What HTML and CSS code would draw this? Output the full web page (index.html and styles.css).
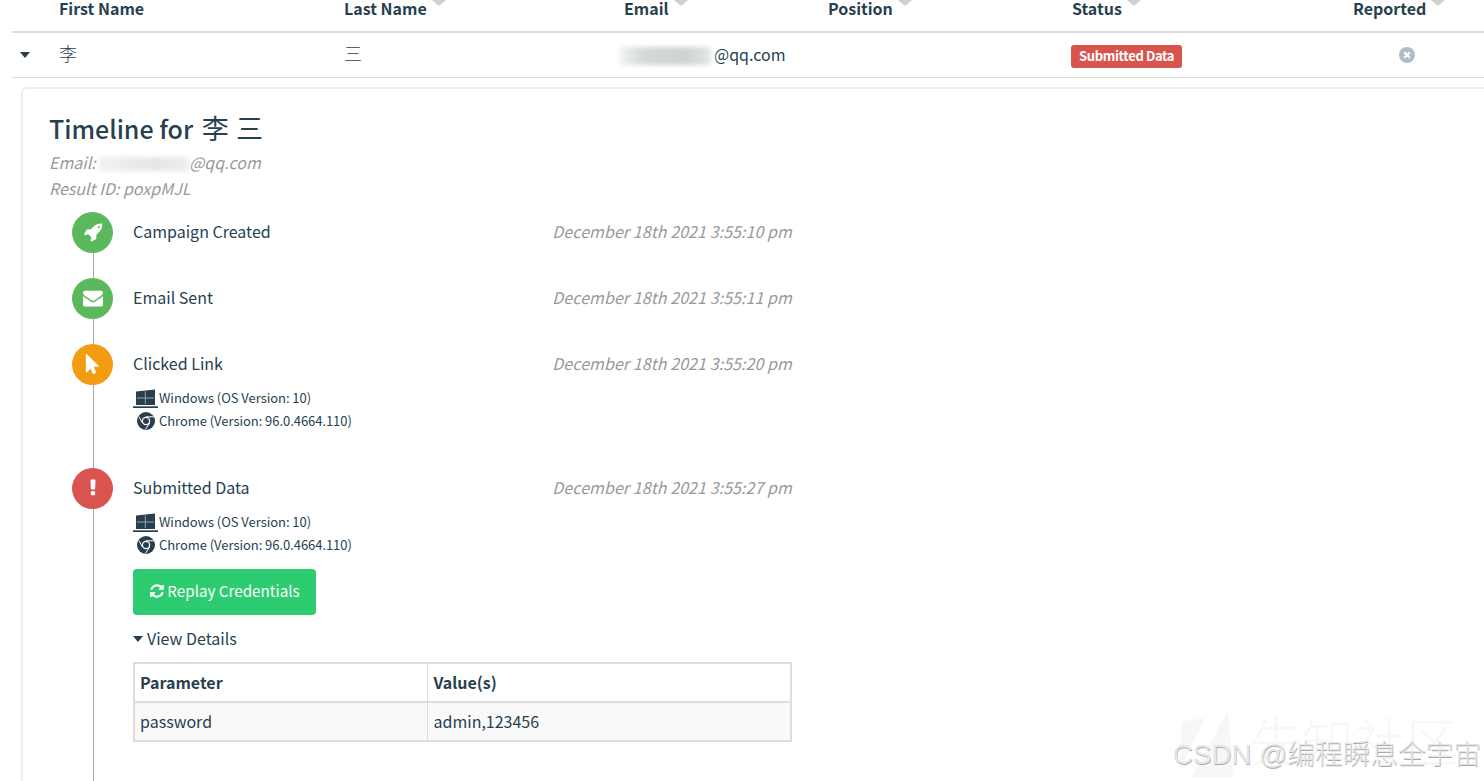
FILE: index.html
```html
<!DOCTYPE html>
<html lang="zh">
<head>
<meta charset="utf-8">
<title>Campaign Results</title>
<link rel="stylesheet" href="styles.css">
</head>
<body>
<svg class="defs" aria-hidden="true">
  <symbol id="i-rocket" viewBox="0 0 1792 1792"><path d="M1504 448q0-40-28-68t-68-28-68 28-28 68 28 68 68 28 68-28 28-68zm224-288q0 249-75.500 430.500t-253.500 360.500q-81 80-195 176l-20 379q-2 16-16 26l-384 224q-7 4-16 4-12 0-23-9l-64-64q-13-14-8-32l85-276-281-281-276 85q-3 1-9 1-14 0-23-9l-64-64q-17-19-5-39l224-384q10-14 26-16l379-20q96-114 176-195 188-187 358-258t431-71q14 0 24 9.500t10 22.500z"/></symbol>
  <symbol id="i-envelope" viewBox="0 0 1792 1792"><path d="M1792 710v794q0 66-47 113t-113 47h-1472q-66 0-113-47t-47-113v-794q44 49 101 87 362 246 497 345 57 42 92.500 65.500t94.500 48 110 24.500h2q51 0 110-24.500t94.500-48 92.500-65.500q170-123 498-345 57-39 100-87zm0-294q0 79-49 151t-122 123q-376 261-468 325-10 7-42.500 30.500t-54 38-52 32.500-57.500 27-50 9h-2q-23 0-50-9t-57.500-27-52-32.500-54-38-42.500-30.500q-91-64-262-182.500t-205-142.500q-62-42-117-115.500t-55-136.500q0-78 41.500-130t118.500-52h1472q65 0 112.500 47t47.500 113z"/></symbol>
  <symbol id="i-pointer" viewBox="0 0 1792 1792"><path d="M1389 1043q31 30 14 69-17 40-59 40h-382l201 476q10 25 0 49t-34 35l-177 75q-25 10-49 0t-35-34l-191-452-312 312q-19 19-45 19-12 0-24-5-40-17-40-59v-1504q0-42 40-59 12-5 24-5 27 0 45 19z"/></symbol>
  <symbol id="i-excl" viewBox="0 0 1792 1792"><path d="M1088 1248v224q0 26-19 45t-45 19h-256q-26 0-45-19t-19-45v-224q0-26 19-45t45-19h256q26 0 45 19t19 45zm30-1056l-28 768q-1 26-20.500 45t-45.500 19h-256q-26 0-45.500-19t-20.500-45l-28-768q-1-26 17.500-45t44.500-19h320q26 0 44.500 19t17.500 45z"/></symbol>
  <symbol id="i-refresh" viewBox="0 0 1792 1792"><path d="M1639 1056q0 5-1 7-64 268-268 434.500t-478 166.500q-146 0-282.500-55t-243.500-157l-129 129q-19 19-45 19t-45-19-19-45v-448q0-26 19-45t45-19h448q26 0 45 19t19 45-19 45l-137 137q71 66 161 102t187 36q134 0 250-65t186-179q11-17 53-117 8-23 30-23h192q13 0 22.500 9.500t9.500 22.500zm25-800v448q0 26-19 45t-45 19h-448q-26 0-45-19t-19-45 19-45l138-138q-148-137-349-137-134 0-250 65t-186 179q-11 17-53 117-8 23-30 23h-199q-13 0-22.500-9.500t-9.500-22.500v-7q65-268 270-434.500t480-166.500q146 0 284 55.500t245 156.500l130-129q19-19 45-19t45 19 19 45z"/></symbol>
  <symbol id="i-laptop" viewBox="0 0 25 19">
    <path fill="currentColor" d="M3 2.400L22 .6V16H3z"/>
    <path fill="none" stroke="#9fb0bc" stroke-width=".9" d="M12.300 2.400V15M4 9h17"/>
    <path fill="currentColor" d="M0 17.300h25V19H0z"/>
  </symbol>
  <symbol id="i-chrome" viewBox="0 0 18 18">
    <circle cx="9" cy="9" r="9" fill="currentColor"/>
    <path fill="none" stroke="#fff" stroke-width="1" d="M9 4.800h7.800M5.500 11.200L2 4.800M12.700 11L8.300 17.500"/>
    <circle cx="9" cy="9" r="4.200" fill="#fff"/>
    <circle cx="9" cy="9" r="3" fill="currentColor"/>
  </symbol>
</svg>

<table class="results">
  <thead>
    <tr>
      <th class="c-toggle"></th>
      <th class="c-first"><span class="sort sort-none">First Name</span></th>
      <th class="c-last"><span class="sort">Last Name</span></th>
      <th class="c-email"><span class="sort">Email</span></th>
      <th class="c-pos"><span class="sort">Position</span></th>
      <th class="c-status"><span class="sort">Status</span></th>
      <th class="c-rep"><span class="sort">Reported</span></th>
    </tr>
  </thead>
  <tbody>
    <tr>
      <td class="toggle-cell"><span class="caret"></span></td>
      <td class="cjk">李</td>
      <td class="cjk">三</td>
      <td class="email-cell"><span class="smudge smudge-row"></span>@qq.com</td>
      <td></td>
      <td><span class="label">Submitted Data</span></td>
      <td class="rep-cell"><svg class="times" viewBox="0 0 16 16"><circle cx="8" cy="8" r="8" fill="#b4bcc2"/><path d="M5.300 5.300l5.400 5.400M10.700 5.300l-5.400 5.400" stroke="#fff" stroke-width="2.200"/></svg></td>
    </tr>
  </tbody>
</table>

<section class="card">
  <h1 class="title">Timeline for <span class="title-cjk">李 三</span></h1>
  <p class="meta">Email: <span class="smudge smudge-meta"></span>@qq.com</p>
  <p class="meta">Result ID: poxpMJL</p>

  <div class="timeline">
    <div class="entry">
      <span class="dot green"><svg class="dot-icon"><use href="#i-rocket"/></svg></span>
      <div class="body">
        <div class="head"><span>Campaign Created</span><time>December 18th 2021 3:55:10 pm</time></div>
      </div>
    </div>
    <div class="entry">
      <span class="dot green"><svg class="dot-icon"><use href="#i-envelope"/></svg></span>
      <div class="body">
        <div class="head"><span>Email Sent</span><time>December 18th 2021 3:55:11 pm</time></div>
      </div>
    </div>
    <div class="entry entry-tall">
      <span class="dot orange"><svg class="dot-icon"><use href="#i-pointer"/></svg></span>
      <div class="body">
        <div class="head"><span>Clicked Link</span><time>December 18th 2021 3:55:20 pm</time></div>
        <div class="agent"><svg class="os"><use href="#i-laptop"/></svg>Windows (OS Version: 10)</div>
        <div class="agent"><span class="browser-wrap"><svg class="browser"><use href="#i-chrome"/></svg></span>Chrome (Version: 96.0.4664.110)</div>
      </div>
    </div>
    <div class="entry">
      <span class="dot red"><svg class="dot-icon"><use href="#i-excl"/></svg></span>
      <div class="body">
        <div class="head"><span>Submitted Data</span><time>December 18th 2021 3:55:27 pm</time></div>
        <div class="agent"><svg class="os"><use href="#i-laptop"/></svg>Windows (OS Version: 10)</div>
        <div class="agent"><span class="browser-wrap"><svg class="browser"><use href="#i-chrome"/></svg></span>Chrome (Version: 96.0.4664.110)</div>
        <button class="replay" type="button"><svg class="refresh"><use href="#i-refresh"/></svg>Replay Credentials</button>
        <div class="details"><span class="caret caret-sm"></span>View Details</div>
        <table class="params">
          <thead><tr><th class="p-name">Parameter</th><th class="p-value">Value(s)</th></tr></thead>
          <tbody><tr><td>password</td><td class="p-value">admin,123456</td></tr></tbody>
        </table>
      </div>
    </div>
  </div>
</section>

<div class="watermark" aria-hidden="true">
  <svg class="wm-logo" viewBox="0 0 60 70"><path d="M3 12L28 8 2 62zM52 0L58 70 14 70z" fill="#f7f7f7"/></svg>
  <span class="wm-big">先知社区</span>
  <span class="wm-csdn">CSDN @编程瞬息全宇宙</span>
</div>
</body>
</html>
```
FILE: styles.css
```css
* { box-sizing: border-box; }
html, body { height: 100%; }
body {
  margin: 0;
  padding: 0 0 0 12px;
  overflow: hidden;
  position: relative;
  background: #fff;
  color: #283f50;
  font-family: "Noto Sans CJK SC", "Source Sans Pro", sans-serif;
  font-size: 16px;
  line-height: 24px;
}
.defs { display: none; }

.results {
  width: 1472px;
  border-collapse: collapse;
  table-layout: fixed;
}
.results th {
  height: 32px;
  padding: 0 8px 15px;
  text-align: left;
  vertical-align: top;
  font-weight: 700;
  line-height: 16px;
  border-bottom: 2px solid #ddd;
}
.c-toggle { width: 39px; }
.c-first { width: 285px; }
.c-last { width: 280px; }
.c-email { width: 204px; }
.c-pos { width: 244px; }
.c-status { width: 281px; }
.sort { position: relative; display: inline-block; }
.sort::after {
  content: "";
  position: absolute;
  left: calc(100% + 5px);
  top: 0;
  border-left: 7px solid transparent;
  border-right: 7px solid transparent;
  border-top: 6px solid #d0d0d0;
}
.sort-none::after { display: none; }
.results td {
  height: 45px;
  padding: 0 8px;
  border-bottom: 1px solid #ddd;
  vertical-align: middle;
}
.results td.cjk { font-size: 18px; font-weight: 300; padding-bottom: 3px; }
.results td.email-cell { padding-bottom: 2px; letter-spacing: .02px; }
.toggle-cell { line-height: 0; }
.caret {
  display: inline-block;
  border-left: 5.500px solid transparent;
  border-right: 5.500px solid transparent;
  border-top: 6px solid #283f50;
}
.caret-sm { margin-right: 4px; vertical-align: 3px; }
.label {
  display: inline-block;
  height: 23px;
  padding: 0 8px;
  border-radius: 3px;
  background: #d9534f;
  color: #fff;
  font-size: 13px;
  font-weight: 700;
  line-height: 22px;
  letter-spacing: -.35px;
  margin-left: -1px;
  vertical-align: middle;
}
.rep-cell { padding-left: 54px !important; line-height: 0; }
.times { width: 16px; height: 16px; }

.smudge {
  display: inline-block;
  vertical-align: middle;
  filter: blur(2px);
}
.smudge-row {
  width: 94px;
  height: 18px;
  margin-left: -4px;
  background: linear-gradient(90deg, #f2f2f2 0, #d5d9da 25%, #cfd3d4 70%, #dfe2e2 92%, #fff 100%);
}
.smudge-meta {
  width: 90px;
  height: 14px;
  background: linear-gradient(90deg, #f2f2f2, #e6e6e6 60%, #eee);
}

.card {
  width: 1500px;
  height: 800px;
  margin: 9px 0 0 9px;
  padding: 24px 26px;
  border: 2px solid #eee;
  border-radius: 6px 0 0 0;
  border-bottom: 0;
  overflow: hidden;
}
.title {
  margin: 0 0 6px;
  font-size: 25px;
  font-weight: 500;
  line-height: 30px;
}
.title-cjk { font-size: 27px; font-weight: 400; margin-left: 3px; word-spacing: 1px; }
.meta {
  margin: 0;
  color: #999;
  font-style: italic;
  line-height: 26px;
}
.timeline {
  position: relative;
  margin: 11px 0 0 1px;
  width: 742px;
}
.timeline::before {
  content: "";
  position: absolute;
  left: 43px;
  top: 0;
  bottom: -100px;
  width: 1px;
  background: #aaa;
}
.entry {
  display: flex;
  min-height: 66px;
  position: relative;
}
.entry-tall { min-height: 124px; }
.dot {
  flex: none;
  width: 41px;
  height: 41px;
  margin: 0 20px 0 22px;
  border-radius: 50%;
  display: flex;
  align-items: center;
  justify-content: center;
  color: #fff;
}
.green { background: #5cb85c; }
.orange { background: #f39c12; }
.red { background: #d9534f; }
.dot-icon { width: 20px; height: 20px; fill: currentColor; }
.body { flex: 1; min-width: 0; }
.head {
  display: flex;
  height: 41px;
  padding-bottom: 2px;
  align-items: center;
  justify-content: space-between;
}
.head time { font-style: italic; color: #999; letter-spacing: .07px; }
.agent {
  display: flex;
  align-items: center;
  height: 23px;
  font-size: 13px;
  letter-spacing: -.05px;
  color: #283f50;
}
.os { width: 25px; height: 19px; margin-right: 1px; color: #283f50; flex: none; }
.browser-wrap { width: 26px; display: flex; justify-content: center; flex: none; }
.browser { width: 18px; height: 18px; color: #283f50; }
.head + .agent { margin-top: 2px; }
.replay {
  display: flex;
  align-items: center;
  justify-content: center;
  width: 183px;
  height: 46px;
  margin: 12px 0 0;
  padding: 0 0 3px;
  border: 0;
  border-radius: 4px;
  background: #2ecc71;
  color: #fff;
  font: inherit;
  font-size: 15.200px;
}
.refresh { width: 16px; height: 16px; margin: 2px 2px 0 0; fill: currentColor; }
.details { margin-top: 11px; }
.params {
  width: 659px;
  margin-top: 12px;
  border-collapse: collapse;
  table-layout: fixed;
  border: 2px solid #ddd;
}
.p-name { width: 293px; }
.params th, .params td {
  height: 39px;
  padding: 0 5px;
  text-align: left;
  border-left: 1px solid #ddd;
}
.params .p-value { padding-left: 6px; }
.params th { font-weight: 700; border-bottom: 2px solid #ddd; }
.params td { background: #f9f9f9; }

.watermark {
  position: absolute;
  right: 0;
  bottom: 0;
  width: 312px;
  height: 75px;
  pointer-events: none;
}
.wm-logo { position: absolute; left: 6px; top: 4px; width: 58px; height: 68px; }
.wm-big {
  position: absolute;
  left: 78px;
  top: 1px;
  font-size: 52px;
  line-height: 66px;
  color: #f7f7f7;
  white-space: nowrap;
  font-weight: 300;
}
.wm-csdn {
  position: absolute;
  left: 1px;
  top: 33px;
  font-family: "Liberation Sans", "Noto Sans CJK SC", sans-serif;
  font-size: 27.700px;
  line-height: 32px;
  font-weight: 300;
  color: #e6e6e6;
  text-shadow: .6px .6px .6px #aaa;
  white-space: nowrap;
}
```
